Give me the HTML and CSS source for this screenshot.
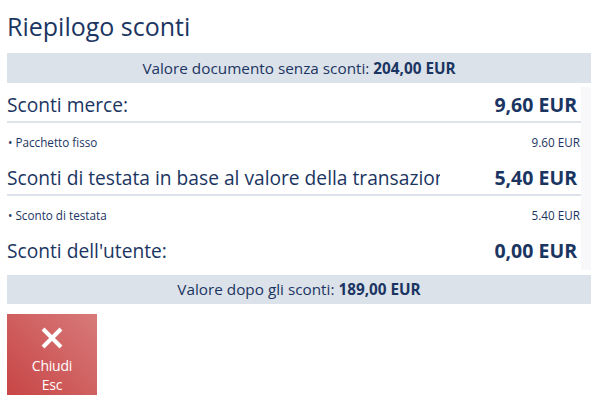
FILE: index.html
```html
<!DOCTYPE html>
<html lang="it">
<head>
    <meta charset="UTF-8">
    <title>Riepilogo sconti</title>
    <link rel="stylesheet" href="styles.css">
</head>
<body>
    <div class="dialog">
        <h1 class="title">Riepilogo sconti</h1>

        <div class="band band-top">Valore documento senza sconti: <b>204,00 EUR</b></div>

        <div class="list">
            <div class="list-inner">
                <div class="group-row">
                    <span class="group-label">Sconti merce:</span>
                    <span class="group-amount">9,60 EUR</span>
                </div>
                <div class="detail-row">
                    <span class="detail-label">&bull; Pacchetto fisso</span>
                    <span class="detail-amount">9.60 EUR</span>
                </div>

                <div class="group-row">
                    <span class="group-label">Sconti di testata in base al valore della transazione:</span>
                    <span class="group-amount">5,40 EUR</span>
                </div>
                <div class="detail-row">
                    <span class="detail-label">&bull; Sconto di testata</span>
                    <span class="detail-amount">5.40 EUR</span>
                </div>

                <div class="group-row last">
                    <span class="group-label">Sconti dell'utente:</span>
                    <span class="group-amount">0,00 EUR</span>
                </div>
            </div>
            <div class="scroll-track"></div>
        </div>

        <div class="band band-bottom">Valore dopo gli sconti: <b>189,00 EUR</b></div>

        <div class="actions">
            <button class="btn-close">
                <svg width="24" height="24" viewBox="0 0 24 24">
                    <path d="M3 3 L21 21 M21 3 L3 21" stroke="#fff" stroke-width="4" fill="none"/>
                </svg>
                <span>Chiudi</span>
                <span>Esc</span>
            </button>
        </div>
    </div>
</body>
</html>
```

FILE: styles.css
```css
html,
body {
    margin: 0;
    padding: 0;
    background: #fff;
}

body {
    font-family: "Open Sans", "Noto Sans", sans-serif;
    color: #1b3562;
}

.dialog {
    padding: 0 8px 0 7px;
}

.title {
    margin: 0;
    padding-top: 8px;
    height: 45px;
    font-size: 25px;
    font-weight: normal;
    line-height: 37px;
}

.band {
    background-color: #dce2ea;
    text-align: center;
    font-size: 15.3px;
}

.band b {
    font-weight: bold;
}

.band-top {
    height: 30px;
    line-height: 30px;
}

.band-bottom {
    margin-top: 5px;
    height: 29px;
    line-height: 29px;
}

.list {
    display: flex;
    margin-top: 4px;
    height: 183px;
}

.list-inner {
    flex: 1;
    overflow: hidden;
}

.scroll-track {
    width: 10px;
    background-color: #f8f8fa;
}

.group-row {
    display: flex;
    align-items: center;
    height: 34px;
    border-bottom: 2px solid #dde2eb;
}

.group-row.last {
    border-bottom: none;
}

.group-label {
    width: 433px;
    font-size: 19.2px;
    white-space: nowrap;
    overflow: hidden;
}

.group-amount {
    flex: 1;
    text-align: right;
    padding-right: 4px;
    font-size: 19.5px;
    font-weight: bold;
}

.detail-row {
    display: flex;
    align-items: center;
    height: 37px;
    font-size: 11.7px;
}

.detail-label {
    flex: 1;
    padding-left: 1px;
}

.detail-amount {
    padding-right: 1px;
}

.actions {
    margin-top: 10px;
}

.btn-close {
    display: flex;
    flex-direction: column;
    align-items: center;
    width: 90px;
    height: 81px;
    padding: 12px 0 0;
    border: none;
    background: linear-gradient(45deg, #c84545 0%, #d87a7a 100%);
    color: #fff;
    font-family: "Open Sans", "Noto Sans", sans-serif;
    font-size: 14px;
    line-height: 19px;
    letter-spacing: -0.2px;
}

.btn-close svg {
    margin-bottom: 6px;
}
```
